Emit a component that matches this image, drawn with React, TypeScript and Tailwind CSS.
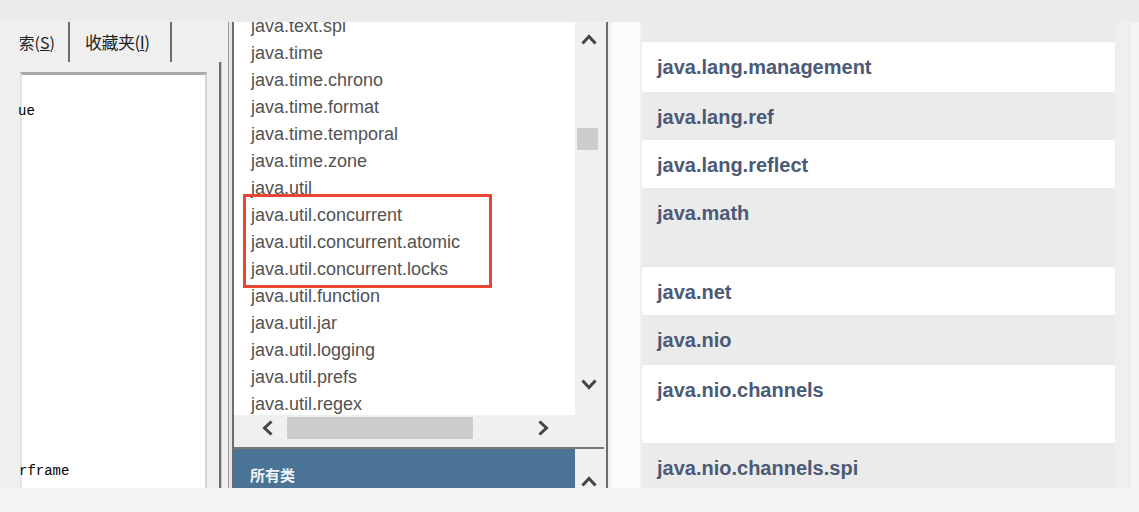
import React from 'react';

const packages = [
  'java.text.spi',
  'java.time',
  'java.time.chrono',
  'java.time.format',
  'java.time.temporal',
  'java.time.zone',
  'java.util',
  'java.util.concurrent',
  'java.util.concurrent.atomic',
  'java.util.concurrent.locks',
  'java.util.function',
  'java.util.jar',
  'java.util.logging',
  'java.util.prefs',
  'java.util.regex',
];

const summaryRows = [
  { name: 'java.lang.invoke', h: 'h-[56px]', white: false },
  { name: 'java.lang.management', h: 'h-[50px]', white: true },
  { name: 'java.lang.ref', h: 'h-[48px]', white: false },
  { name: 'java.lang.reflect', h: 'h-[48px]', white: true },
  { name: 'java.math', h: 'h-[79px]', white: false },
  { name: 'java.net', h: 'h-[48px]', white: true },
  { name: 'java.nio', h: 'h-[50px]', white: false },
  { name: 'java.nio.channels', h: 'h-[78px]', white: true },
  { name: 'java.nio.channels.spi', h: 'h-[60px]', white: false },
];

function Chevron({ dir }: { dir: 'up' | 'down' | 'left' | 'right' }) {
  const pts = {
    up: '1.5,11.5 8,4.5 14.5,11.5',
    down: '1.5,4.5 8,11.5 14.5,4.5',
    left: '11.5,1.5 4.5,8 11.5,14.5',
    right: '4.5,1.5 11.5,8 4.5,14.5',
  }[dir];
  return (
    <svg width="16" height="16" viewBox="0 0 16 16" className="block">
      <polyline points={pts} fill="none" stroke="#444444" strokeWidth="3" strokeLinejoin="miter" />
    </svg>
  );
}

function LeftPanel() {
  return (
    <div className="flex w-[222px] flex-col">
      <div className="flex h-[40px] items-stretch font-['Noto_Sans_CJK_SC',sans-serif] text-[16px] text-[#1e1e1e]">
        <div className="w-[20px]" />
        <div className="flex w-[48px] items-center justify-end overflow-hidden pr-[13px]">
          <span className="whitespace-nowrap">
            搜索(<span className="underline">S</span>)
          </span>
        </div>
        <div className="w-[2px] bg-[#6e6e6e]" />
        <div className="flex w-[100px] items-center pl-[15px] text-[17px] tracking-[-0.5px]">
          <span className="whitespace-nowrap">
            收藏夹(<span className="underline">I</span>)
          </span>
        </div>
        <div className="w-[2px] bg-[#6e6e6e]" />
        <div className="flex-1" />
      </div>
      <div className="flex flex-1">
        <div className="w-[20px]" />
        <div className="mt-[10px] flex w-[187px] flex-col border-t-[3px] border-r-2 border-l-2 border-t-[#a9a9a9] border-r-[#d6d6d6] border-l-[#e4e4e4] bg-white font-['Liberation_Mono',monospace] text-[14px] text-black">
          <div className="mt-[27px] -ml-[4px] leading-[18px]">ue</div>
          <div className="flex-1" />
          <div className="mb-[8px] -ml-[3px] leading-[18px]">rframe</div>
        </div>
        <div className="flex-1" />
        <div className="w-[2px] bg-[#6c6c6c]" />
        <div className="w-[1px] bg-[#c8c8c8]" />
      </div>
    </div>
  );
}

function MiddlePanel() {
  return (
    <div className="flex w-[386px]">
      <div className="w-[6px]" />
      <div className="w-[1px] bg-[#9c9c9c]" />
      <div className="w-[3px] bg-[#e6e6e6]" />
      <div className="w-[2px] bg-[#6d6d6d]" />
      <div className="flex w-[370px] flex-col">
        <div className="flex h-[418px]">
          <div className="flex w-[341px] flex-col">
            <div className="relative h-[393px] overflow-hidden bg-white font-['Liberation_Sans',Arial,sans-serif] text-[18px] text-[#525252]">
              <div className="-mt-[9px] pl-[17px]">
                {packages.map((p) => (
                  <div key={p} className="h-[27px] whitespace-nowrap leading-[27px]">
                    {p}
                  </div>
                ))}
              </div>
              <div className="absolute top-[172px] left-[9px] h-[94px] w-[249px] border-[3px] border-[#ea4530]" />
            </div>
            <div className="flex h-[25px] items-center bg-[#f0f0f0]">
              <div className="ml-[26px]">
                <Chevron dir="left" />
              </div>
              <div className="ml-[11px] h-[22px] w-[186px] bg-[#cdcdcd]" />
              <div className="ml-[62px]">
                <Chevron dir="right" />
              </div>
            </div>
          </div>
          <div className="flex w-[29px] flex-col bg-[#f0f0f0]">
            <div className="mt-[10px] ml-[6px]">
              <Chevron dir="up" />
            </div>
            <div className="mt-[80px] ml-[2px] h-[22px] w-[21px] bg-[#cdcdcd]" />
            <div className="mt-[226px] ml-[6px]">
              <Chevron dir="down" />
            </div>
          </div>
        </div>
        <div className="h-[7px] bg-[#efefef]" />
        <div className="h-[2px] bg-[#767676]" />
        <div className="flex h-[39px]">
          <div className="w-[341px] bg-[#4a7395] pt-[14px] pl-[16px] font-['Noto_Sans_CJK_SC',sans-serif] text-[15px] font-bold leading-[24px] text-[#eef4fa]">
            所有类
          </div>
          <div className="w-[29px] bg-[#f0f0f0] pt-[25px] pl-[6px]">
            <Chevron dir="up" />
          </div>
        </div>
      </div>
      <div className="w-[2px]" />
      <div className="w-[2px] bg-[#6d6d6d]" />
    </div>
  );
}

function RightPanel() {
  return (
    <div className="flex flex-1">
      <div className="w-[3px]" />
      <div className="w-[29px] bg-[#fbfbfb]" />
      <div className="w-[2px]" />
      <div className="w-[473px] overflow-hidden font-['Liberation_Sans',Arial,sans-serif] text-[20px] font-bold text-[#4b5a76]">
        <div className="-mt-[36px]">
          {summaryRows.map((r) => (
            <div
              key={r.name}
              className={`${r.h} ${r.white ? 'bg-white' : 'bg-[#ebebeb]'} rounded-[3px] pt-[13px] pl-[15px] leading-[24px] whitespace-nowrap`}
            >
              {r.name}
            </div>
          ))}
        </div>
      </div>
      <div className="w-[16px]" />
      <div className="flex-1 bg-[#f5f5f5]" />
    </div>
  );
}

export default function App() {
  return (
    <div className="flex h-[512px] w-[1139px] flex-col overflow-hidden bg-[#efefef]">
      <div className="h-[22px] bg-[#ebebeb]" />
      <div className="flex h-[466px]">
        <LeftPanel />
        <MiddlePanel />
        <RightPanel />
      </div>
      <div className="h-[24px] bg-[#f4f4f4]" />
    </div>
  );
}
